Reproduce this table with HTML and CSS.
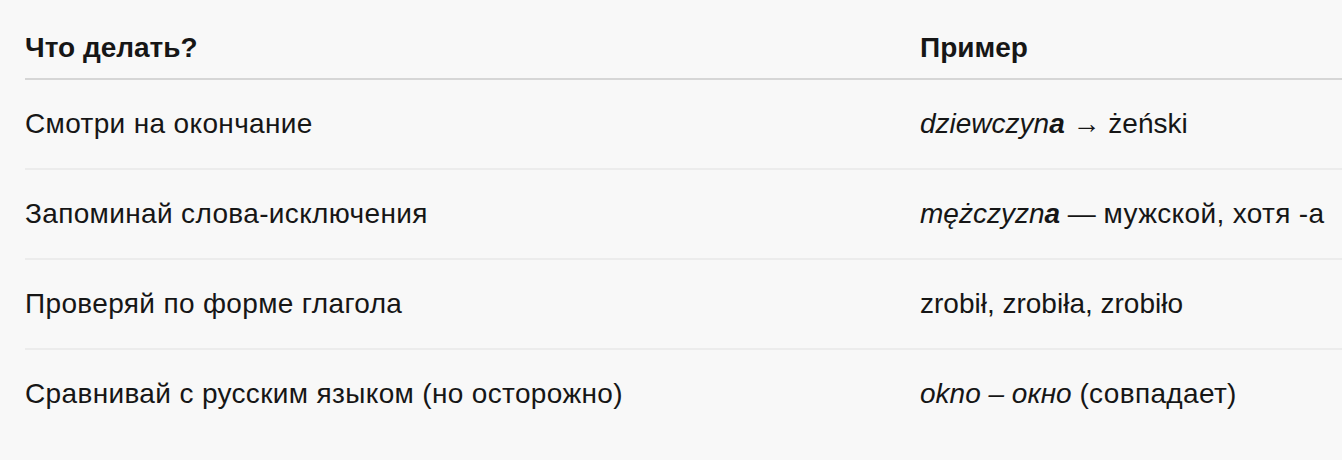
FILE: index.html
```html
<!DOCTYPE html>
<html lang="ru">
<head>
<meta charset="utf-8">
<link rel="stylesheet" href="styles.css">
</head>
<body>
<div class="table">
  <div class="row head">
    <div class="cell">Что делать?</div>
    <div class="cell">Пример</div>
  </div>
  <div class="row">
    <div class="cell ru">Смотри на окончание</div>
    <div class="cell"><i>dziewczyn<b>a</b></i> → żeński</div>
  </div>
  <div class="row">
    <div class="cell ru">Запоминай слова-исключения</div>
    <div class="cell"><i>mężczyzn<b>a</b></i> — <span class="ru">мужской, хотя -а</span></div>
  </div>
  <div class="row">
    <div class="cell ru">Проверяй по форме глагола</div>
    <div class="cell">zrobił, zrobiła, zrobiło</div>
  </div>
  <div class="row last">
    <div class="cell ru">Сравнивай с русским языком (но осторожно)</div>
    <div class="cell"><i>okno – окно</i> <span class="ru">(совпадает)</span></div>
  </div>
</div>
</body>
</html>
```
FILE: styles.css
```css
html, body {
  margin: 0;
  padding: 0;
  background: #f8f8f8;
}
body {
  font-family: "Liberation Sans", Arial, sans-serif;
  font-size: 28px;
  color: #161616;
  overflow: hidden;
}
.table {
  margin: 18px 0 0 25px;
}
.row {
  display: grid;
  grid-template-columns: 895px 1fr;
  border-bottom: 2px solid #ececec;
}
.row .cell {
  padding: 29px 0;
  line-height: 30px;
  white-space: nowrap;
}
.ru {
  letter-spacing: 0.35px;
}
.row.head {
  border-bottom: 2px solid #d6d6d6;
}
.row.head .cell {
  padding: 15px 0;
  font-weight: bold;
}
.row.last {
  border-bottom: none;
}
```
